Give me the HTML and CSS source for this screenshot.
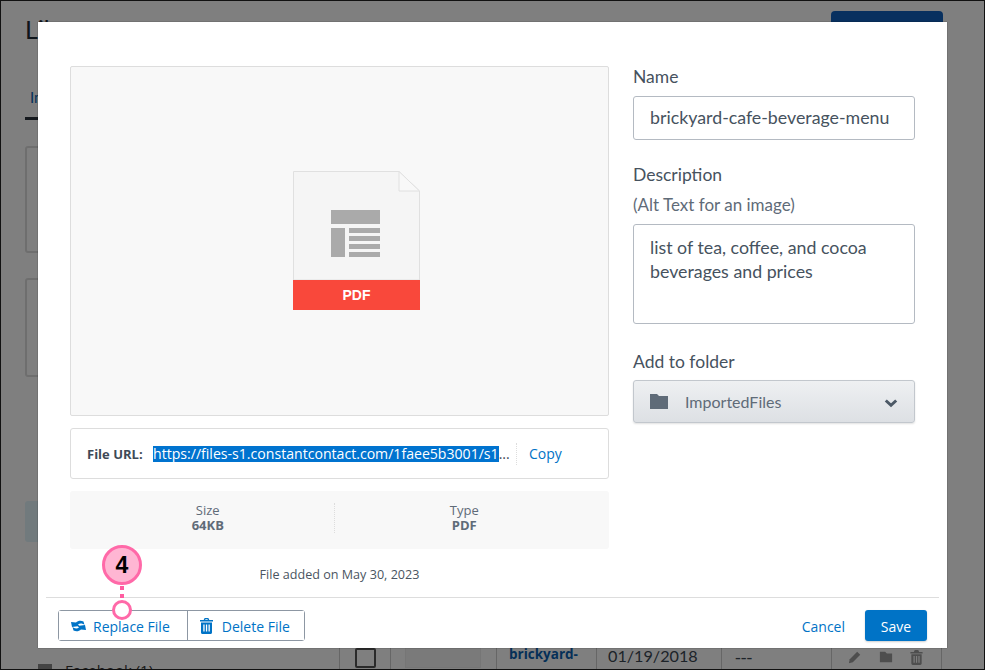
FILE: index.html
```html
<!DOCTYPE html>
<html lang="en">
<head>
<meta charset="utf-8">
<title>Library</title>
<link rel="stylesheet" href="styles.css">
</head>
<body>
<div class="page">
  <header class="page-head">
    <h1>Library</h1>
    <button class="primary-bg">Add New</button>
  </header>
  <nav class="tabs"><span class="tab">Images</span></nav>
  <div class="panel panel-a"></div>
  <div class="panel panel-b"></div>
  <div class="nav-item active"></div>
  <div class="last-row">
    <span class="facebook"><i class="fb-box"></i>Facebook (1)</span>
    <div class="table-row">
      <span class="cell cell-check"><i class="checkbox"></i></span>
      <span class="cell cell-thumb"><i class="thumb"></i></span>
      <span class="cell cell-name">brickyard-</span>
      <span class="cell cell-date">01/19/2018</span>
      <span class="cell cell-dash">---</span>
      <span class="cell cell-actions">
        <svg viewBox="0 0 16 16" width="14" height="14"><path d="M1 15l1-4.500L10.500 2l3.500 3.500L5.500 14z" fill="#9c9c9c"/></svg>
        <svg viewBox="0 0 16 16" width="14" height="14"><path d="M1 2h6l2 2h6v10H1z" fill="#9c9c9c"/></svg>
        <svg viewBox="0 0 13 16" width="13" height="15"><path d="M4 1.200C4.200.500 4.700 0 5.400 0h2.200c.7 0 1.200.5 1.400 1.200L9.300 2H13v1.600H0V2h3.700zM1 4.500h11V14.500c0 .9-.6 1.500-1.500 1.500h-8C1.600 16 1 15.400 1 14.500zM3.300 6.500v7h1.300v-7zm2.600 0v7h1.300v-7zm2.600 0v7h1.300v-7z" fill="#9c9c9c"/></svg>
      </span>
    </div>
  </div>
</div>
<div class="scrim"></div>
<div class="modal">
  <div class="modal-body">
    <div class="col-left">
      <div class="preview">
        <svg class="doc" viewBox="0 0 127 139" width="127" height="139">
          <path d="M.5 .5H106L126.500 20V109H.5Z" fill="#f5f5f5" stroke="#e0e0e0"/>
          <path d="M106 .5V20H126.500Z" fill="#f8f8f8" stroke="#e0e0e0"/>
          <g fill="#aaa">
            <rect x="38" y="39" width="49" height="14"/>
            <rect x="38" y="57" width="14" height="29"/>
            <rect x="56" y="57" width="31" height="5"/>
            <rect x="56" y="65" width="31" height="5"/>
            <rect x="56" y="73" width="31" height="5"/>
            <rect x="56" y="81" width="31" height="5"/>
          </g>
          <rect y="109" width="127" height="30" fill="#f9483b"/>
          <text x="63.500" y="129" class="doc-label">PDF</text>
        </svg>
      </div>
      <div class="url-box">
        <span class="url-label">File URL:</span>
        <span class="url-value"><span class="url-selected">https://files-s1.constantcontact.com/1faee5b3001/s1</span>...</span>
        <a class="copy">Copy</a>
      </div>
      <div class="meta">
        <div class="meta-cell meta-size"><span>Size</span><b>64KB</b></div>
        <div class="meta-cell meta-type"><span>Type</span><b>PDF</b></div>
      </div>
      <p class="added">File added on May 30, 2023</p>
    </div>
    <div class="col-right">
      <label class="field-label">Name</label>
      <div class="input">brickyard-cafe-beverage-menu</div>
      <label class="field-label label-desc">Description</label>
      <div class="hint">(Alt Text for an image)</div>
      <div class="input textarea">list of tea, coffee, and cocoa beverages and prices</div>
      <label class="field-label label-folder">Add to folder</label>
      <div class="select">
        <svg viewBox="0 0 18 15" width="18" height="15"><path d="M0 0h7l2 2h9v13H0z" fill="#5f6b78"/></svg>
        <span class="select-text">ImportedFiles</span>
        <svg class="chev" viewBox="0 0 14 9" width="14" height="9"><path d="M1.800 1.500L7 6.300l5.200-4.800" fill="none" stroke="#4c5966" stroke-width="3"/></svg>
      </div>
    </div>
  </div>
  <footer class="modal-foot">
    <div class="btn-group">
      <button class="btn btn-replace">
        <svg viewBox="0 0 15 12" width="15" height="12" fill="#0073c6"><path d="M0 2l5 .5C7 .500 10 .300 12.500 1.500L13.500 5C12 3.500 9 3 7 4.500L8.500 6 1 7z"/><path transform="rotate(180 7.500 6)" d="M0 2l5 .5C7 .500 10 .300 12.500 1.500L13.500 5C12 3.500 9 3 7 4.500L8.500 6 1 7z"/></svg>
        <span class="btn-text">Replace File</span>
      </button>
      <button class="btn btn-delete">
        <svg viewBox="0 0 13 16" width="13" height="16"><path d="M4 1.200C4.200.500 4.700 0 5.400 0h2.200c.7 0 1.200.5 1.400 1.200L9.300 2H13v1.600H0V2h3.700zM5.200 2h2.600l-.3-.8h-2zM1 4.500h11V14.500c0 .9-.6 1.500-1.500 1.500h-8C1.600 16 1 15.400 1 14.500zM3.300 6.500v7h1.300v-7zm2.600 0v7h1.300v-7zm2.600 0v7h1.300v-7z" fill="#0073c6"/></svg>
        <span class="btn-text">Delete File</span>
      </button>
    </div>
    <div class="foot-right">
      <a class="cancel">Cancel</a>
      <button class="save">Save</button>
    </div>
  </footer>
</div>
<div class="callout">
  <span class="callout-num">4</span>
  <i class="callout-line"></i>
  <i class="callout-dot"></i>
</div>
</body>
</html>
```
FILE: styles.css
```css
* { box-sizing: border-box; }
html, body { margin: 0; height: 100%; }
body { position: relative; overflow: hidden; background: #fff; font-family: "Open Sans", sans-serif; color: #3a4652; border: 1px solid #111; }
.page { height: 668px; padding: 0 41px 0 24px; display: flex; flex-direction: column; overflow: hidden; }
.page > * { flex: none; }
.page-head { display: flex; justify-content: space-between; height: 75px; padding-top: 10px; }
.page-head h1 { margin: 3px 0 0; font: 400 25px Lato, sans-serif; color: #1f2a36; }
.primary-bg { width: 112px; height: 40px; border: 0; border-radius: 4px; background: #1060bf; color: #fff; }
.tabs { height: 44px; font: 400 15px Lato, sans-serif; color: #0a5fb0; padding-top: 12px; }
.tab { display: block; width: 80px; height: 32px; padding-left: 5px; border-bottom: 3px solid #2a333d; }
.panel { width: 120px; border: 2px solid #ddd; border-radius: 3px; position: relative; }
.panel-a { height: 107px; margin-top: 26px; }
.panel-b { height: 99px; margin-top: 25px; }
.nav-item { width: 120px; height: 41px; margin-top: 124px; border-radius: 3px; background: #e2f4fb; }
.last-row { display: flex; align-items: flex-start; margin-top: 98px; }
.facebook { display: flex; gap: 13px; margin: 20px 0 0 13px; width: 301px; font-size: 15px; color: #333; white-space: nowrap; }
.fb-box { width: 14px; height: 14px; margin-top: 4px; background: #888; }
.table-row { display: flex; height: 40px; font-size: 16px; }
.cell { border-left: 1px solid #ccc; }
.cell-check { width: 51px; padding: 8px 0 0 15px; }
.checkbox { display: block; width: 21px; height: 20px; border: 2px solid #555; border-radius: 2px; }
.cell-thumb { width: 106px; padding: 0 0 0 14px; }
.thumb { display: block; width: 76px; height: 28px; background: #f5f5f5; border: 1px solid #ececec; }
.cell-name { width: 100px; padding: 5px 0 0 12px; font-size: 13.500px; font-weight: 700; color: #0a5fb0; }
.cell-date { width: 125px; padding: 6px 0 0 11px; font-family: Lato, sans-serif; font-size: 16.200px; }
.cell-dash { width: 110px; padding: 5px 0 0 13px; font-size: 18px; }
.cell-actions { width: 111px; border-right: 1px solid #ccc; display: flex; align-items: flex-start; gap: 17px; padding: 10px 0 0 16px; }
.scrim { position: absolute; inset: 0; background: rgba(0,0,0,.5); }
.modal { position: absolute; left: 37px; top: 21px; width: 909px; height: 626px; background: #fff; box-shadow: 0 0 1px rgba(0,0,0,.6); display: flex; flex-direction: column; }
.modal-body { flex: 1; display: flex; gap: 24px; padding: 44px 32px 0; }
.col-left { width: 539px; }
.col-right { width: 282px; font-family: Lato, sans-serif; }
.preview { height: 350px; background: #f8f8f8; border: 1px solid #ddd; border-radius: 2px; display: flex; align-items: center; justify-content: center; }
.doc { display: block; margin: -1px 0 0 34px; }
.doc-label { font: 700 14px "Liberation Sans", sans-serif; fill: #fff; text-anchor: middle; }
.url-box { display: flex; align-items: center; height: 51px; margin-top: 12px; padding-left: 16px; border: 1px solid #ddd; border-radius: 3px; font-size: 14.100px; color: #3e4a56; }
.url-label { width: 66px; font-weight: 700; font-size: 13px; }
.url-value { width: 364px; border-right: 1px dotted #ddd; white-space: nowrap; overflow: hidden; line-height: 22px; }
.url-selected { display: inline-block; line-height: 16px; background: #0073cf; color: #fff; }
.copy { margin-left: 12px; font-size: 14px; color: #0073c6; }
.meta { display: flex; align-items: center; height: 58px; margin-top: 12px; padding: 0 15px 5px 12px; background: #f8f8f8; border-radius: 3px; font-size: 13px; color: #5f6b78; }
.meta-cell { display: flex; flex-direction: column; align-items: center; line-height: 15px; }
.meta-size { flex: 252; }
.meta-type { flex: 260; border-left: 1px dotted #ddd; }
.added { margin: 17px 0 0; text-align: center; font-size: 12.600px; color: #4a5561; }
.field-label { display: block; font-size: 17.500px; line-height: 22px; color: #46525e; }
.input { height: 44px; margin-top: 8px; padding: 0 16px; border: 1px solid #b4bac2; border-radius: 3px; font-size: 17.800px; line-height: 41px; color: #46525e; white-space: nowrap; }
.label-desc { margin-top: 24px; }
.hint { margin-top: 8px; font-size: 17px; line-height: 22px; color: #5f6b78; }
.textarea { height: 100px; margin-top: 8px; padding: 10px 16px; white-space: normal; line-height: 24px; }
.label-folder { margin-top: 27px; }
.select { display: flex; align-items: center; height: 43px; margin-top: 7px; padding: 0 16px; border: 1px solid #c2c7cd; border-radius: 3px; background: linear-gradient(#eef0f2, #dde0e4); box-shadow: 0 1px 2px rgba(0,0,0,.12); }
.select-text { margin-left: 17px; flex: 1; font-size: 16px; color: #5f6b78; }
.chev { margin-top: 4px; }
.modal-foot { position: relative; display: flex; justify-content: space-between; align-items: center; height: 51px; margin: 0 8px; padding: 12px 12px 7px; border-top: 1px solid #ddd; }
.btn-group { display: flex; height: 31px; border: 1px solid #8d97a3; border-radius: 3px; }
.btn { display: flex; align-items: center; border: 0; background: #fff; font: 400 14px "Open Sans", sans-serif; color: #0073c6; }
.btn-text { padding-top: 1px; }
.btn-replace { gap: 7px; padding: 0 17px 0 12px; }
.btn-delete { gap: 9px; padding: 0 14px 0 12px; border-left: 1px solid #8d97a3; }
.foot-right { display: flex; align-items: center; gap: 20px; }
.cancel { padding-top: 1px; font-size: 14px; color: #0073c6; }
.save { width: 62px; height: 31px; padding: 1px 0 0; border: 0; border-radius: 3px; background: #0073c6; color: #fff; font: 400 14px "Open Sans", sans-serif; box-shadow: 0 1px 2px rgba(0,0,0,.2); }
.callout { position: absolute; left: 101px; top: 544px; width: 40px; height: 40px; padding-top: 1px; border: 3px solid #ff69a8; border-radius: 50%; background: #ffb6d3; display: flex; align-items: center; justify-content: center; font: 700 23px "Liberation Sans", sans-serif; color: #000; }
.callout-line { position: absolute; left: 15px; top: 38px; width: 4px; height: 12px; background: repeating-linear-gradient(#ff5ca0 0 4px, transparent 4px 8px); }
.callout-dot { position: absolute; left: 7px; top: 52px; width: 20px; height: 20px; border: 3px solid #ff69a8; border-radius: 50%; background: #fff; }
```
